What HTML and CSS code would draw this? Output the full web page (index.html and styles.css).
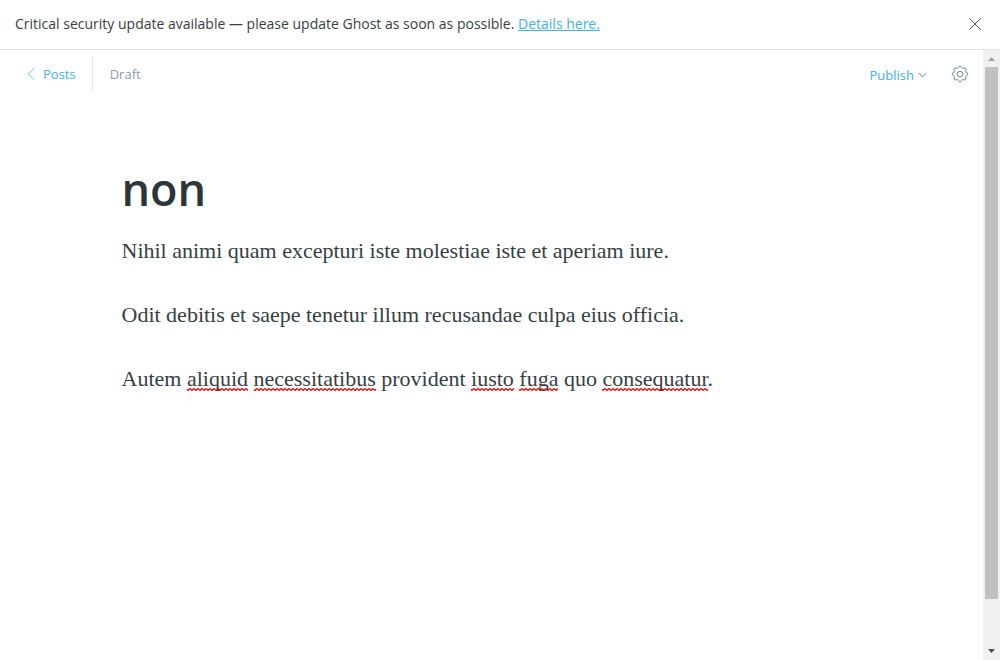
FILE: index.html
```html
<!DOCTYPE html>
<html lang="en">
<head>
<meta charset="utf-8">
<title>Editor</title>
<link rel="stylesheet" href="styles.css">
</head>
<body>
<aside class="alert">
  <p class="alert-text">Critical security update available — please update Ghost as soon as possible. <a class="link" href="#">Details here.</a></p>
  <button class="icon-button" type="button" aria-label="Close">
    <svg width="14" height="14" viewBox="0 0 14 14"><path d="M1.200 1.200l11.600 11.600M12.800 1.200l-11.600 11.600"/></svg>
  </button>
</aside>
<div class="viewport">
  <main class="editor">
    <header class="toolbar">
      <a class="back" href="#">
        <svg width="8" height="14" viewBox="0 0 8 14"><path d="M7 1.500L1.200 7L7 12.500"/></svg>
        Posts
      </a>
      <span class="status">Draft</span>
      <button class="publish" type="button">Publish
        <svg width="9" height="6" viewBox="0 0 9 6"><path d="M.7.900L4.500 5L8.300.900"/></svg>
      </button>
      <button class="icon-button settings" type="button" aria-label="Settings">
        <svg width="18" height="18" viewBox="0 0 18 18"><path d="M7.700 1.800Q9 .4 10.300 1.800L11 3.300Q11.400 3.700 12 3.500L13.600 3Q15.300 3 15 4.800L14.500 6.200Q14.400 6.800 14.900 7.100L16.300 7.800Q17.500 9 16.300 10.200L14.900 10.900Q14.400 11.200 14.500 11.800L15 13.200Q15.300 15 13.600 15L12 14.500Q11.400 14.300 11 14.700L10.300 16.200Q9 17.600 7.700 16.200L7 14.700Q6.600 14.300 6 14.500L4.400 15Q2.700 15 3 13.200L3.500 11.800Q3.600 11.200 3.100 10.900L1.700 10.200Q.5 9 1.700 7.800L3.100 7.100Q3.600 6.800 3.500 6.200L3 4.800Q2.700 3 4.400 3L6 3.500Q6.600 3.700 7 3.300z"/><circle cx="9" cy="9" r="2.800"/></svg>
      </button>
    </header>
    <article class="post">
      <h1 class="title">non</h1>
      <p>Nihil animi quam excepturi iste molestiae iste et aperiam iure.</p>
      <p>Odit debitis et saepe tenetur illum recusandae culpa eius officia.</p>
      <p>Autem <span class="misspelt">aliquid</span> <span class="misspelt">necessitatibus</span> provident <span class="misspelt">iusto</span> <span class="misspelt">fuga</span> quo <span class="misspelt">consequatur</span>.</p>
    </article>
  </main>
  <div class="scrollbar" aria-hidden="true">
    <svg class="arrow up" width="17" height="17" viewBox="0 0 17 17"><path d="M5 11l3.500-4L12 11z"/></svg>
    <div class="track"><div class="thumb"></div></div>
    <svg class="arrow" width="17" height="17" viewBox="0 0 17 17"><path d="M5 6h7l-3.500 4z"/></svg>
  </div>
</div>
</body>
</html>
```
FILE: styles.css
```css
* { box-sizing: border-box; }
body {
  margin: 0;
  height: 100vh;
  display: flex;
  flex-direction: column;
  background: #fff;
  color: #343f44;
  font: 13px/20px "Open Sans", "Noto Sans", sans-serif;
}
button {
  border: 0;
  padding: 0;
  background: none;
  font: inherit;
  cursor: pointer;
}
svg { display: block; fill: none; stroke: currentColor; }
.alert {
  display: flex;
  align-items: center;
  justify-content: space-between;
  padding: 14px 18px 15px 15px;
  border-bottom: 1px solid #dfe1e3;
}
.alert-text { margin: 0; font-size: 14px; }
.link { color: #3eb0ef; }
.icon-button { color: #4b5559; }
.viewport { flex: 1; display: flex; min-height: 0; }
.editor { flex: 1; min-width: 0; }
.toolbar {
  display: flex;
  align-items: center;
  padding: 6px 14px 7px 27px;
}
.back {
  display: flex;
  align-items: center;
  gap: 8px;
  height: 36px;
  padding-right: 16px;
  border-right: 1px solid #dfe9ef;
  color: #3eb0ef;
  text-decoration: none;
}
.back svg { stroke-width: 1; opacity: .8; }
.status { margin-left: 17px; color: #8a9fad; }
.publish {
  display: flex;
  align-items: center;
  gap: 4px;
  margin-left: auto;
  padding-top: 2px;
  color: #3eb0ef;
}
.publish svg { color: #738a94; }
.settings { margin-left: 24px; color: #738a94; }
.post {
  max-width: 740px;
  margin: 60px auto 0;
  font: 22px/32px "Liberation Serif", serif;
}
.post p { margin: 0 0 32px; }
.title {
  margin: 0 0 16px;
  color: #2b353a;
  font: 600 45px/60px "Open Sans", sans-serif;
}
.misspelt {
  background: url("data:image/svg+xml,%3Csvg xmlns='http://www.w3.org/2000/svg' width='4' height='3'%3E%3Cpath d='M-1 0L1 2L3 0L5 2' transform='translate(0 .5)' fill='none' stroke='red' stroke-width='1.2'/%3E%3C/svg%3E") repeat-x left bottom;
}
.scrollbar {
  width: 17px;
  display: flex;
  flex-direction: column;
  background: #f1f1f1;
}
.arrow { fill: #505050; stroke: none; }
.up { fill: #a0a0a0; }
.track { flex: 1; padding: 0 2px; }
.thumb { height: 92.4%; background: #c1c1c1; }
```
